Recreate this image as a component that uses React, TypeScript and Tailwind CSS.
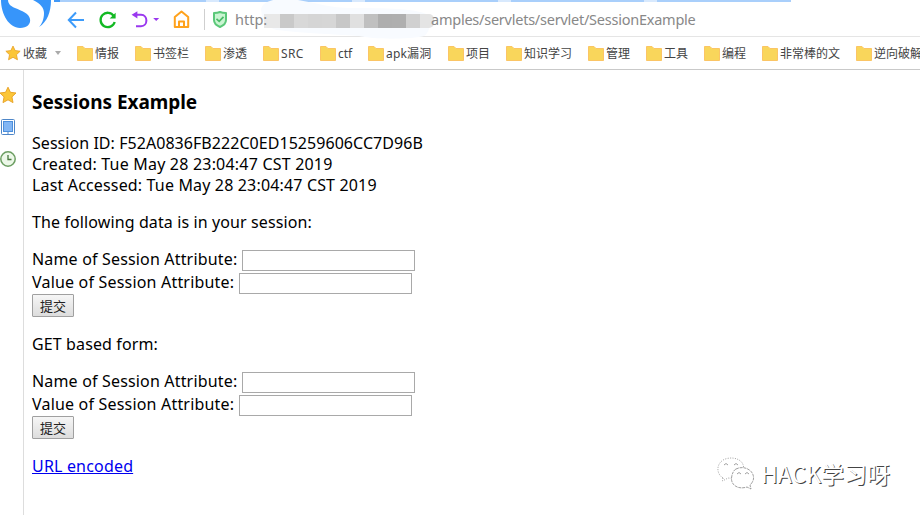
import React from 'react';

const bookmarks: { label: string; width: string; tracking?: string }[] = [
  { label: '情报', width: 'w-[58px]' },
  { label: '书签栏', width: 'w-[70px]' },
  { label: '渗透', width: 'w-[58px]' },
  { label: 'SRC', width: 'w-[57px]', tracking: 'tracking-[0.4px]' },
  { label: 'ctf', width: 'w-[48px]' },
  { label: 'apk漏洞', width: 'w-[80px]', tracking: 'tracking-[0.2px]' },
  { label: '项目', width: 'w-[58px]' },
  { label: '知识学习', width: 'w-[82px]' },
  { label: '管理', width: 'w-[58px]' },
  { label: '工具', width: 'w-[58px]' },
  { label: '编程', width: 'w-[58px]' },
  { label: '非常棒的文', width: 'w-[94px]' },
  { label: '逆向破解', width: 'w-[82px]' },
];

const mosaic = ['bg-[#e8e8e8]', 'bg-[#c9c9c9]', 'bg-[#d8d8d8]', 'bg-[#d5d5d5]', 'bg-[#d6d6d6]', 'bg-[#c7c7c7]', 'bg-[#e0e0e0]', 'bg-[#c0c0c0]', 'bg-[#aeaeae]', 'bg-[#afafaf]', 'bg-[#d0d0d0]', 'bg-[#e4e4e4]'];

function Star({ size }: { size: number }) {
  return (
    <svg width={size} height={size} viewBox="0 0 18 18" className="shrink-0">
      <path d="M9 1.2 11.4 6.3 17 7 12.9 10.9 14 16.6 9 13.8 4 16.6 5.1 10.9 1 7 6.6 6.3Z" fill="#fbc638" stroke="#e9a52b" strokeLinejoin="round" />
    </svg>
  );
}

function Folder() {
  return (
    <svg width="16" height="15" viewBox="0 0 16 15" className="shrink-0">
      <path d="M.5 .5H6L8 2.5H15.5V14.5H.5Z" fill="#f9d65b" stroke="#fbc565" />
    </svg>
  );
}

function Toolbar() {
  return (
    <header className="relative flex h-[37px] w-full shrink-0 items-start border-b border-[#e5e5e5]">
      <div className="absolute left-[54px] top-0 flex h-[2px] w-[737px] bg-[#a9cffb]">
        <span className="w-[6px] bg-[#4299f7]" />
        <span className="ml-[146px] w-[13px] bg-[#d8e9fd]" />
        <span className="ml-[133px] w-[13px] bg-[#d8e9fd]" />
        <span className="ml-[133px] w-[13px] bg-[#d8e9fd]" />
        <span className="ml-[133px] w-[13px] bg-[#d8e9fd]" />
      </div>
      <svg width="60" height="36" viewBox="0 0 60 36" className="shrink-0">
        <path d="M1 0C1 14 9 28 20 28C27 28 31 24 30 19C29 13 22 11 15 8C10 6 8 3 8 0Z" fill="#3795fa" />
        <path d="M33 0C41 4 44 8 44 13C44 19 42 24 39 27C47 22 51 12 51 0Z" fill="#3795fa" />
      </svg>
      <svg width="140" height="36" viewBox="60 0 140 36" fill="none" strokeWidth="2" className="shrink-0">
        <path d="M84 20H69M76 12.5 68.8 20 76 27.5" stroke="#3c9bfa" />
        <path d="M113.8 16A7.2 7.2 0 1 0 114.7 22" stroke="#13b923" strokeWidth="2.3" />
        <path d="M115.6 12.8V18.6H109.7Z" fill="#13b923" />
        <path d="M134 14.8H141C148.2 14.8 148.2 26.2 141 26.2H136" stroke="#9a38ef" />
        <path d="M137.4 11.2V18.5L131.6 14.8Z" fill="#9a38ef" />
        <path d="M153.2 18H159.2L156.2 21Z" fill="#9a38ef" />
        <path d="M174.8 17 181.5 11.5 188.2 17V27H174.8ZM179 27V21.5H184V27" stroke="#ffa21c" strokeLinejoin="round" />
      </svg>
      <svg width="34" height="36" viewBox="200 0 34 36" fill="none" className="shrink-0">
        <path d="M204.5 9V30" stroke="#cfcfcf" />
        <path d="M214 13Q217.500 13 220 12Q222.500 13 226 13V20C226 24 223 25.700 220 27C217 25.700 214 24 214 20Z" fill="#caf5d2" stroke="#5bc879" strokeWidth="2" strokeLinejoin="round" />
        <path d="M216.500 18.800 219.200 21.300 223.500 16.800" stroke="#4abb68" strokeWidth="1.700" />
      </svg>
      <svg width="174" height="39" viewBox="0 0 174 39" className="absolute left-[261px] top-0">
        <path d="M0 9C2 0 18-3 37 0C55 3 70 8 90 8C120 8 160 8 168 16C170 23 169 32 163 36C145 40 110 39 98 36C70 34 40 33 16 30C8 28 4 24 1 17Z" fill="#f8fbff" />
      </svg>
      <div className="absolute left-[264px] top-[14px] flex h-[14px] overflow-hidden rounded-r-[5px]">
        <span className="w-[2px] bg-[#e8e8e8]" />
        {mosaic.map((color, index) => <span key={index} className={`w-[14px] ${color}`} />)}
      </div>
      <div className="relative mt-[9px] flex h-[22px] items-center whitespace-nowrap font-['Noto_Sans',sans-serif] text-[14.500px] text-[#888888]">
        <span className="w-[32px] pl-px">http:</span>
        <span className="w-[165px]" />
        <span className="tracking-[-0.24px]">amples/servlets/servlet/SessionExample</span>
      </div>
    </header>
  );
}

function BookmarkBar() {
  return (
    <nav className="flex h-[33px] shrink-0 items-center overflow-hidden whitespace-nowrap border-b border-[#c9c9c9] pl-[5px] font-['Noto_Sans','Noto_Sans_CJK_SC',sans-serif] text-[12px] text-[#444444]">
      <div className="flex w-[72px] shrink-0 items-center">
        <Star size={16} />
        <span className="ml-[2px] pt-[2px]">收藏</span>
        <span className="ml-[8px] border-x-[3px] border-t-[4px] border-x-transparent border-t-[#aaaaaa]" />
      </div>
      {bookmarks.map(({ label, width, tracking }) => (
        <div key={label} className={`flex shrink-0 items-center gap-[2px] ${width}`}>
          <Folder /><span className={`pt-[2px] ${tracking ?? ''}`}>{label}</span>
        </div>
      ))}
    </nav>
  );
}

function Sidebar() {
  return (
    <aside className="flex w-[24px] shrink-0 flex-col items-start border-r border-[#dddddd] pt-[16px]">
      <div className="-ml-px h-[17px]"><Star size={18} /></div>
      <svg width="17" height="17" viewBox="0 0 17 17" className="mt-[15px]">
        <rect x="1.500" y="1.500" width="13" height="15" rx="1" fill="#fff" stroke="#4e86c8" />
        <rect x="3.500" y="3.500" width="9" height="10" fill="#82b6f4" stroke="#4d8fdc" />
        <path d="M7 15H9" stroke="#4e86c8" />
      </svg>
      <svg width="17" height="18" viewBox="0 0 17 18" className="mt-[15px]" fill="none">
        <circle cx="8" cy="9" r="7.200" fill="#edf8e9" stroke="#6c9e62" strokeWidth="1.500" />
        <path d="M8 5V9.500H11.500" stroke="#48783e" strokeWidth="1.300" />
      </svg>
    </aside>
  );
}

function SessionForm() {
  return (
    <form className="h-[69px]">
      <div className="flex h-[23px] items-start">
        <label className="w-[210px] tracking-[0.17px]">Name of Session Attribute:</label>
        <input className="mt-px h-[21px] w-[173px] border border-[#a9a9a9] bg-white" />
      </div>
      <div className="flex h-[23px] items-start">
        <label className="w-[207px] tracking-[0.19px]">Value of Session Attribute:</label>
        <input className="mt-px h-[21px] w-[173px] border border-[#a9a9a9] bg-white" />
      </div>
      <button type="button" className="-mt-px block h-[23px] w-[42px] rounded-[1px] border border-[#a0a0a0] bg-linear-to-b from-[#f6f6f6] to-[#dddddd] font-['Noto_Sans_CJK_SC',sans-serif] text-[13px] leading-[20px] text-[#222222]">提交</button>
    </form>
  );
}

function Watermark() {
  return (
    <div className="absolute left-[716px] top-[455px] flex h-[38px] items-center">
      <svg width="40" height="36" viewBox="0 0 40 36" fill="#fff" stroke="#888" strokeWidth=".8">
        <path d="M7 22C-1 17 .5 5 11 2.500C20 .5 28 5 27.500 12C27 20 20 23 12 22L6.500 25Z" strokeDasharray="1 1.4" />
        <path d="M20 13C28 9 37 14 37.500 21C38 25 35 28 34 29L35 33L31 31C22 34 15 29 15.500 22C16 17 18 14 20 13Z" strokeDasharray="3 .8" />
        <path d="M8 9Q10 6 12 9M18 9Q20 6 22 9M21 18Q23 15 25 18M29 18Q31 15 33 18" fill="none" />
      </svg>
      <span className="mb-[2px] ml-[5px] whitespace-nowrap font-['Noto_Sans_CJK_SC',sans-serif] text-[23px] leading-none text-white [text-shadow:1px_1px_0_#444]">HACK学习呀</span>
    </div>
  );
}

export default function App() {
  return (
    <div className="relative flex h-[515px] w-[920px] flex-col overflow-hidden bg-white text-black">
      <Toolbar />
      <BookmarkBar />
      <div className="flex min-h-0 flex-1">
        <Sidebar />
        <main className="whitespace-nowrap pl-[8px] pt-[20px] font-['Noto_Sans',sans-serif] text-[16px] leading-[21px]">
          <h1 className="h-[25px] text-[19px] font-bold leading-[25px] tracking-[-0.04px]">Sessions Example</h1>
          <div className="mt-[18px]">
            <p className="tracking-[0.05px]">Session ID: F52A0836FB222C0ED15259606CC7D96B</p>
            <p className="tracking-[0.2px]">Created: Tue May 28 23:04:47 CST 2019</p>
            <p className="tracking-[0.16px]">Last Accessed: Tue May 28 23:04:47 CST 2019</p>
          </div>
          <p className="mt-[16px] tracking-[0.11px]">The following data is in your session:</p>
          <div className="mt-[16px]"><SessionForm /></div>
          <p className="mt-[16px] tracking-[0.12px]">GET based form:</p>
          <div className="mt-[16px]"><SessionForm /></div>
          <p className="mt-[16px] tracking-[0.18px]"><a href="#encoded" className="text-[#0000ee] underline">URL encoded</a></p>
        </main>
      </div>
      <Watermark />
    </div>
  );
}
